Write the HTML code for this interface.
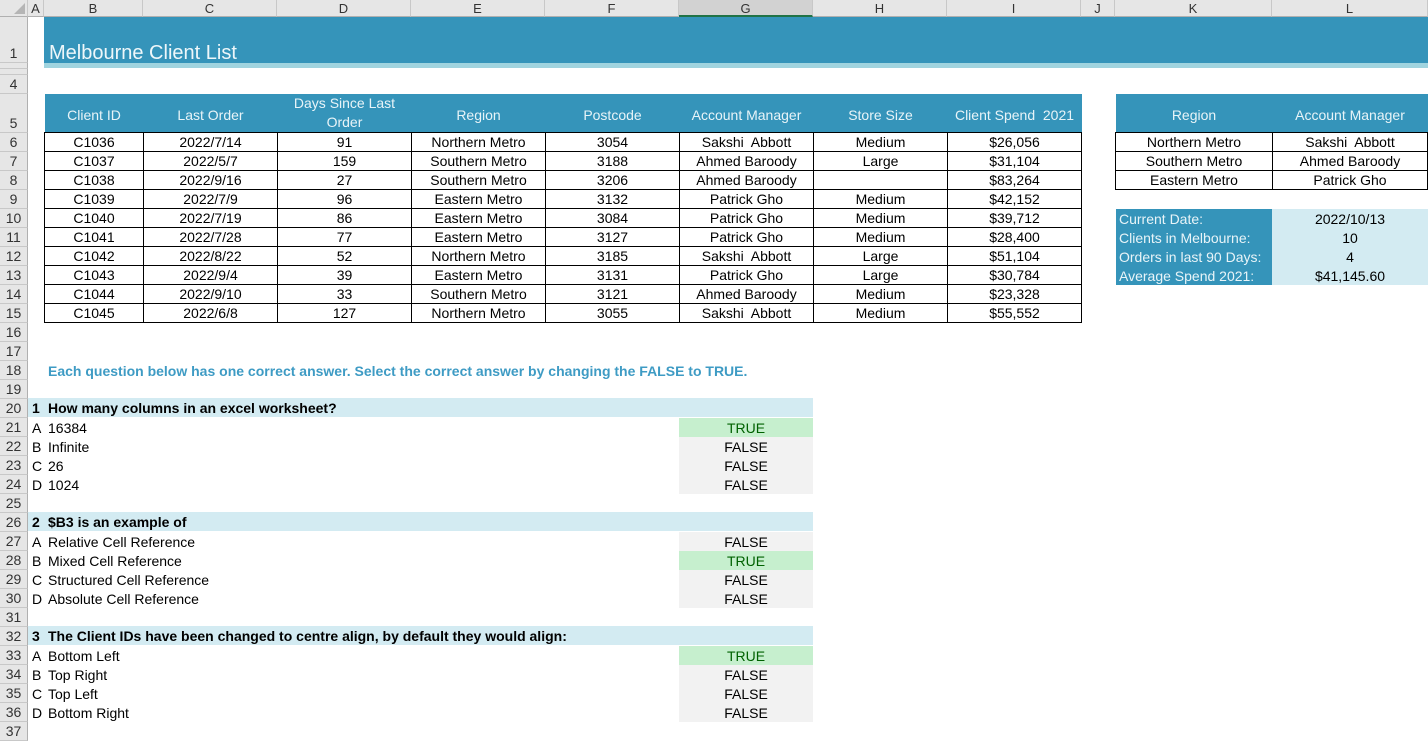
<!DOCTYPE html>
<html><head><meta charset="utf-8">
<style>
*{margin:0;padding:0;box-sizing:border-box}
body{width:1428px;height:740px;overflow:hidden;background:#fff;font-family:"Liberation Sans","Noto Sans CJK SC",sans-serif;font-size:14px;color:#000;position:relative}
.a{position:absolute}
.colhdr{position:absolute;top:0;height:17px;background:#e6e6e6;border-right:1px solid #c8c8c8;border-bottom:1px solid #b0b0b0;text-align:center;font-size:13px;line-height:17px;color:#333}
.rowhdr{position:absolute;left:0;width:28px;background:#e6e6e6;border-bottom:1px solid #c8c8c8;border-right:1px solid #b0b0b0;text-align:center;font-size:14px;color:#333;display:flex;align-items:flex-end;justify-content:center;line-height:18px;overflow:hidden}
table{border-collapse:collapse;table-layout:fixed;position:absolute}
td{text-align:center;height:19px;line-height:18px;padding:0;white-space:nowrap;overflow:hidden}
.body td{border:1px solid #000}
.hd td{background:#3594ba;color:#e8f4f8;border:none;height:38px;line-height:18px}
.q{position:absolute;left:28px;width:785px;height:19px;background:#d3ebf2;font-weight:bold;line-height:21px}
.ans{position:absolute;left:679px;width:134px;height:19px;text-align:center;line-height:21px;background:#f2f2f2}
.t{background:#c6efce;color:#006100}
.lt{position:absolute;height:19px;line-height:21px}
</style></head><body>

<div class="colhdr" style="left:0;width:28px;background:#e6e6e6"><svg width="14" height="14" style="position:absolute;left:13px;top:2px"><polygon points="12,1 12,12 1,12" fill="#b5b5b5"/></svg></div>
<div class="colhdr" style="left:28px;width:16px">A</div>
<div class="colhdr" style="left:44px;width:99px">B</div>
<div class="colhdr" style="left:143px;width:134px">C</div>
<div class="colhdr" style="left:277px;width:134px">D</div>
<div class="colhdr" style="left:411px;width:134px">E</div>
<div class="colhdr" style="left:545px;width:134px">F</div>
<div class="colhdr" style="left:679px;width:134px;background:#d2d2d2;border-bottom:2px solid #217346">G</div>
<div class="colhdr" style="left:813px;width:134px">H</div>
<div class="colhdr" style="left:947px;width:134px">I</div>
<div class="colhdr" style="left:1081px;width:34px">J</div>
<div class="colhdr" style="left:1115px;width:157px">K</div>
<div class="colhdr" style="left:1272px;width:156px">L</div>

<div class="rowhdr" style="top:17px;height:46px">1</div>
<div class="rowhdr" style="top:63px;height:6px"></div>
<div class="rowhdr" style="top:69px;height:6px"></div>
<div class="rowhdr" style="top:75px;height:19px">4</div>
<div class="rowhdr" style="top:94px;height:39px">5</div>
<div class="rowhdr" style="top:133px;height:19px">6</div>
<div class="rowhdr" style="top:152px;height:19px">7</div>
<div class="rowhdr" style="top:171px;height:19px">8</div>
<div class="rowhdr" style="top:190px;height:19px">9</div>
<div class="rowhdr" style="top:209px;height:19px">10</div>
<div class="rowhdr" style="top:228px;height:19px">11</div>
<div class="rowhdr" style="top:247px;height:19px">12</div>
<div class="rowhdr" style="top:266px;height:19px">13</div>
<div class="rowhdr" style="top:285px;height:19px">14</div>
<div class="rowhdr" style="top:304px;height:19px">15</div>
<div class="rowhdr" style="top:323px;height:19px">16</div>
<div class="rowhdr" style="top:342px;height:19px">17</div>
<div class="rowhdr" style="top:361px;height:19px">18</div>
<div class="rowhdr" style="top:380px;height:19px">19</div>
<div class="rowhdr" style="top:399px;height:19px">20</div>
<div class="rowhdr" style="top:418px;height:19px">21</div>
<div class="rowhdr" style="top:437px;height:19px">22</div>
<div class="rowhdr" style="top:456px;height:19px">23</div>
<div class="rowhdr" style="top:475px;height:19px">24</div>
<div class="rowhdr" style="top:494px;height:19px">25</div>
<div class="rowhdr" style="top:513px;height:19px">26</div>
<div class="rowhdr" style="top:532px;height:19px">27</div>
<div class="rowhdr" style="top:551px;height:19px">28</div>
<div class="rowhdr" style="top:570px;height:19px">29</div>
<div class="rowhdr" style="top:589px;height:19px">30</div>
<div class="rowhdr" style="top:608px;height:19px">31</div>
<div class="rowhdr" style="top:627px;height:19px">32</div>
<div class="rowhdr" style="top:646px;height:19px">33</div>
<div class="rowhdr" style="top:665px;height:19px">34</div>
<div class="rowhdr" style="top:684px;height:19px">35</div>
<div class="rowhdr" style="top:703px;height:19px">36</div>
<div class="rowhdr" style="top:722px;height:19px">37</div>

<div class="a" style="left:44px;top:17px;width:1384px;height:46px;background:#3594ba"></div>
<div class="a" style="left:44px;top:63px;width:1384px;height:5px;background:#a0d4df"></div>
<div class="a" style="left:49px;top:41px;font-size:20px;color:#eef7fa;line-height:24px">Melbourne Client List</div>

<table style="left:44px;top:94px;width:1037px">
<colgroup><col style="width:99px"><col style="width:134px"><col style="width:134px"><col style="width:134px"><col style="width:134px"><col style="width:134px"><col style="width:134px"><col style="width:134px"></colgroup>
<tr class="hd"><td style="padding-top:4px">Client ID</td><td style="padding-top:4px">Last Order</td><td style="white-space:normal;line-height:19px">Days Since Last<br>Order</td><td style="padding-top:4px">Region</td><td style="padding-top:4px">Postcode</td><td style="padding-top:4px">Account Manager</td><td style="padding-top:4px">Store Size</td><td style="padding-top:4px">Client Spend&nbsp; 2021</td></tr>
<tbody class="body">
<tr><td>C1036</td><td>2022/7/14</td><td>91</td><td>Northern Metro</td><td>3054</td><td>Sakshi&nbsp; Abbott</td><td>Medium</td><td>$26,056</td></tr>
<tr><td>C1037</td><td>2022/5/7</td><td>159</td><td>Southern Metro</td><td>3188</td><td>Ahmed Baroody</td><td>Large</td><td>$31,104</td></tr>
<tr><td>C1038</td><td>2022/9/16</td><td>27</td><td>Southern Metro</td><td>3206</td><td>Ahmed Baroody</td><td></td><td>$83,264</td></tr>
<tr><td>C1039</td><td>2022/7/9</td><td>96</td><td>Eastern Metro</td><td>3132</td><td>Patrick Gho</td><td>Medium</td><td>$42,152</td></tr>
<tr><td>C1040</td><td>2022/7/19</td><td>86</td><td>Eastern Metro</td><td>3084</td><td>Patrick Gho</td><td>Medium</td><td>$39,712</td></tr>
<tr><td>C1041</td><td>2022/7/28</td><td>77</td><td>Eastern Metro</td><td>3127</td><td>Patrick Gho</td><td>Medium</td><td>$28,400</td></tr>
<tr><td>C1042</td><td>2022/8/22</td><td>52</td><td>Northern Metro</td><td>3185</td><td>Sakshi&nbsp; Abbott</td><td>Large</td><td>$51,104</td></tr>
<tr><td>C1043</td><td>2022/9/4</td><td>39</td><td>Eastern Metro</td><td>3131</td><td>Patrick Gho</td><td>Large</td><td>$30,784</td></tr>
<tr><td>C1044</td><td>2022/9/10</td><td>33</td><td>Southern Metro</td><td>3121</td><td>Ahmed Baroody</td><td>Medium</td><td>$23,328</td></tr>
<tr><td>C1045</td><td>2022/6/8</td><td>127</td><td>Northern Metro</td><td>3055</td><td>Sakshi&nbsp; Abbott</td><td>Medium</td><td>$55,552</td></tr>
</tbody></table>

<table style="left:1115px;top:94px;width:312px">
<colgroup><col style="width:157px"><col style="width:155px"></colgroup>
<tr class="hd"><td style="padding-top:4px">Region</td><td style="padding-top:4px">Account Manager</td></tr>
<tbody class="body">
<tr><td>Northern Metro</td><td>Sakshi&nbsp; Abbott</td></tr>
<tr><td>Southern Metro</td><td>Ahmed Baroody</td></tr>
<tr><td>Eastern Metro</td><td>Patrick Gho</td></tr>
</tbody></table>

<div class="a" style="left:1116px;top:209px;width:156px;height:76px;background:#3594ba"></div>
<div class="a" style="left:1272px;top:209px;width:156px;height:76px;background:#d3ebf2"></div>
<div class="lt" style="left:1119px;top:209px;color:#e8f4f8">Current Date:</div>
<div class="lt" style="left:1119px;top:228px;color:#e8f4f8">Clients in Melbourne:</div>
<div class="lt" style="left:1119px;top:247px;color:#e8f4f8">Orders in last 90 Days:</div>
<div class="lt" style="left:1119px;top:266px;color:#e8f4f8">Average Spend 2021:</div>
<div class="lt" style="left:1272px;width:156px;text-align:center;top:209px">2022/10/13</div>
<div class="lt" style="left:1272px;width:156px;text-align:center;top:228px">10</div>
<div class="lt" style="left:1272px;width:156px;text-align:center;top:247px">4</div>
<div class="lt" style="left:1272px;width:156px;text-align:center;top:266px">$41,145.60</div>

<div class="lt" style="left:48px;top:361px;color:#3e9bc4;font-weight:bold">Each question below has one correct answer. Select the correct answer by changing the FALSE to TRUE.</div>

<div class="q" style="top:398px"><span style="margin-left:4px">1</span><span style="position:absolute;left:20px">How many columns in an excel worksheet?</span></div>
<div class="lt" style="left:32px;top:418px">A</div><div class="lt" style="left:48px;top:418px">16384</div>
<div class="lt" style="left:32px;top:437px">B</div><div class="lt" style="left:48px;top:437px">Infinite</div>
<div class="lt" style="left:32px;top:456px">C</div><div class="lt" style="left:48px;top:456px">26</div>
<div class="lt" style="left:32px;top:475px">D</div><div class="lt" style="left:48px;top:475px">1024</div>
<div class="ans t" style="top:418px">TRUE</div>
<div class="ans" style="top:437px">FALSE</div>
<div class="ans" style="top:456px">FALSE</div>
<div class="ans" style="top:475px">FALSE</div>

<div class="q" style="top:512px"><span style="margin-left:4px">2</span><span style="position:absolute;left:20px">$B3 is an example of</span></div>
<div class="lt" style="left:32px;top:532px">A</div><div class="lt" style="left:48px;top:532px">Relative Cell Reference</div>
<div class="lt" style="left:32px;top:551px">B</div><div class="lt" style="left:48px;top:551px">Mixed Cell Reference</div>
<div class="lt" style="left:32px;top:570px">C</div><div class="lt" style="left:48px;top:570px">Structured Cell Reference</div>
<div class="lt" style="left:32px;top:589px">D</div><div class="lt" style="left:48px;top:589px">Absolute Cell Reference</div>
<div class="ans" style="top:532px">FALSE</div>
<div class="ans t" style="top:551px">TRUE</div>
<div class="ans" style="top:570px">FALSE</div>
<div class="ans" style="top:589px">FALSE</div>

<div class="q" style="top:626px"><span style="margin-left:4px">3</span><span style="position:absolute;left:20px">The Client IDs have been changed to centre align, by default they would align:</span></div>
<div class="lt" style="left:32px;top:646px">A</div><div class="lt" style="left:48px;top:646px">Bottom Left</div>
<div class="lt" style="left:32px;top:665px">B</div><div class="lt" style="left:48px;top:665px">Top Right</div>
<div class="lt" style="left:32px;top:684px">C</div><div class="lt" style="left:48px;top:684px">Top Left</div>
<div class="lt" style="left:32px;top:703px">D</div><div class="lt" style="left:48px;top:703px">Bottom Right</div>
<div class="ans t" style="top:646px">TRUE</div>
<div class="ans" style="top:665px">FALSE</div>
<div class="ans" style="top:684px">FALSE</div>
<div class="ans" style="top:703px">FALSE</div>

</body></html>
